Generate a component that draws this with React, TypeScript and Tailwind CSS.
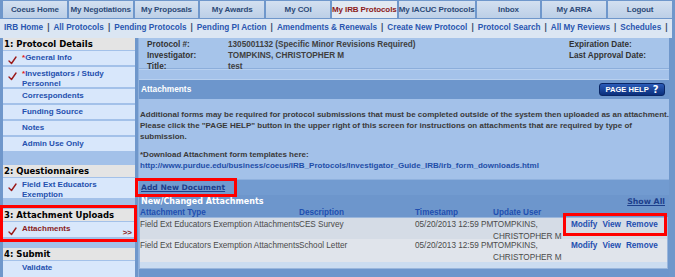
import React from "react";

const LS = { fontFamily: '"Liberation Sans", Arial, sans-serif' };
const DV = { fontFamily: '"DejaVu Sans", Verdana, sans-serif' };

function Check() {
  return (
    <svg width="9" height="9" viewBox="0 0 9 9" className="shrink-0">
      <path d="M1 5 L3.5 7.5 L8 1" fill="none" stroke="#9b1b1b" strokeWidth="1.4" strokeLinecap="round" strokeLinejoin="round" />
    </svg>
  );
}

function Header({ children }: { children: React.ReactNode }) {
  return (
    <div className="h-[12px] bg-[#e4e4e4] text-[8.5px] font-bold text-black leading-[12px] pl-[1px] whitespace-nowrap" style={DV}>
      {children}
    </div>
  );
}

function Item({ children, checked, h, active }: { children: React.ReactNode; checked?: boolean; h: string; active?: boolean }) {
  return (
    <div className={`${h} bg-[#d8e7fb] flex items-start pt-[2px] relative`}>
      <div className="w-[19px] pl-[5px] flex items-center h-[10px] mt-[2px]">{checked ? <Check /> : null}</div>
      <div className={active ? "text-[8px] font-bold leading-[10px] text-[#8a1c22]" : "text-[8px] font-bold leading-[10px] text-[#2450ae]"}>{children}</div>
      {active ? <div className="absolute right-[3px] top-[5px] text-[8px] font-bold text-[#8a1c22]">&gt;&gt;</div> : null}
    </div>
  );
}

export default function App() {
  const tabs = ["Coeus Home", "My Negotiations", "My Proposals", "My Awards", "My COI", "My IRB Protocols", "My IACUC Protocols", "Inbox", "My ARRA", "Logout"];
  const links = ["IRB Home", "All Protocols", "Pending Protocols", "Pending PI Action", "Amendments & Renewals", "Create New Protocol", "Protocol Search", "All My Reviews", "Schedules"];
  const rows = [
    { bg: "bg-[#d5dce6] h-[21px]", desc: "CES Survey" },
    { bg: "bg-[#e0e4eb] h-[23px]", desc: "School Letter" },
  ];
  return (
    <div className="w-[675px] h-[277px] overflow-hidden bg-[#6f97cb] relative" style={LS}>
      {/* tabs */}
      <div className="flex gap-[2px] px-[3px] pt-[1px] h-[18px]">
        {tabs.map((t) =>
          t === "My IRB Protocols" ? (
            <div key={t} className="flex-1 flex items-center justify-center bg-[#e2e9f2] text-[8px] font-bold text-[#8b1a1a] whitespace-nowrap tracking-[-0.1px]">
              {t}
            </div>
          ) : (
            <div key={t} className="flex-1 flex items-center justify-center bg-gradient-to-b from-[#d3e0f0] to-[#bccfe7] text-[8px] font-bold text-[#2c4a78] whitespace-nowrap tracking-[-0.1px]">
              {t}
            </div>
          )
        )}
      </div>
      {/* link bar */}
      <div className="mt-[1px] mr-[3px] h-[19px] bg-[#dbe6f3] flex items-center pl-[4px] text-[8.2px] font-bold text-[#2a56b0] whitespace-nowrap">
        {links.map((l) => (
          <span key={l} className="flex items-center">
            <span>{l}</span>
            <span className="text-[#3a4a6a] px-[4px]">|</span>
          </span>
        ))}
      </div>
      {/* body */}
      <div className="flex h-[239px] gap-[3px] pl-[3px]">
        {/* sidebar */}
        <div className="w-[132px] bg-[#a3c1e9] flex flex-col">
          <Header>1: Protocol Details</Header>
          <div className="mt-[1px]">
            <Item h="h-[14px]" checked>
              <span className="text-[#e02020]">*</span>General Info
            </Item>
          </div>
          <div className="mt-[2px]">
            <Item h="h-[20px]" checked>
              <span className="text-[#e02020]">*</span>Investigators / Study
              <br />
              Personnel
            </Item>
          </div>
          <div className="mt-[2px]"><Item h="h-[14px]">Correspondents</Item></div>
          <div className="mt-[2px]"><Item h="h-[14px]">Funding Source</Item></div>
          <div className="mt-[2px]"><Item h="h-[14px]">Notes</Item></div>
          <div className="mt-[2px]"><Item h="h-[14px]">Admin Use Only</Item></div>
          <div className="mt-[14px]"><Header>2: Questionnaires</Header></div>
          <div className="mt-[1px]">
            <Item h="h-[20px]" checked>
              Field Ext Educators
              <br />
              Exemption
            </Item>
          </div>
          <div className="mt-[11px]"><Header>3: Attachment Uploads</Header></div>
          <div className="mt-[1px]">
            <Item h="h-[15px]" checked active>
              Attachments
            </Item>
          </div>
          <div className="mt-[11px]"><Header>4: Submit</Header></div>
          <div className="mt-[1px]"><Item h="h-[16px]">Validate</Item></div>
        </div>
        {/* main */}
        <div className="w-[531px] flex flex-col bg-[#a3c1e9] border-l border-[#8eb0dc]">
          <div className="h-[31px] bg-[#a6c4ea] border-b border-[#8caedb] pt-[1px] pl-[8px] text-[8.2px] font-bold text-[#333] leading-[11px] whitespace-nowrap">
            <div className="flex">
              <div className="w-[81px]">Protocol #:</div>
              <div className="w-[341px] text-[#404040]">1305001132 (Specific Minor Revisions Required)</div>
              <div>Expiration Date:</div>
            </div>
            <div className="flex">
              <div className="w-[81px]">Investigator:</div>
              <div className="w-[341px] text-[#404040]">TOMPKINS, CHRISTOPHER M</div>
              <div>Last Approval Date:</div>
            </div>
            <div className="flex">
              <div className="w-[81px]">Title:</div>
              <div className="text-[#404040]">test</div>
            </div>
          </div>
          <div className="h-[11px] border-y border-[#b8d0ef] bg-[#a4c2ea]" />
          <div className="h-[19px] bg-[#6d96cc] flex items-start justify-between pl-[2px] pr-[4px]">
            <div className="text-[8.3px] font-bold text-white pt-[3px]">Attachments</div>
            <div className="mt-[3px] h-[13px] w-[66px] rounded-[3px] bg-gradient-to-b from-[#2b5cb8] to-[#0b2f7c] border border-[#0a2766] flex items-center justify-center gap-[4px] text-white font-bold">
              <span className="text-[7.6px]">PAGE HELP</span>
              <span className="text-[10px] leading-[10px]" style={{ fontFamily: '"DejaVu Sans", sans-serif' }}>?</span>
            </div>
          </div>
          <div className="h-[80px] pt-[10px] pl-[1px] text-[8px] font-bold text-[#3a3a3a] leading-[11px] whitespace-nowrap">
            <div>Additional forms may be required for protocol submissions that must be completed outside of the system then uploaded as an attachment.</div>
            <div>Please click the "PAGE HELP" button in the upper right of this screen for instructions on attachments that are required by type of</div>
            <div>submission.</div>
            <div className="mt-[7px]">*Download Attachment form templates here:</div>
            <div className="text-[#1f4ea8]">http://www.purdue.edu/business/coeus/IRB_Protocols/Investigator_Guide_IRB/irb_form_downloads.html</div>
          </div>
          <div className="h-[16px] bg-[#729bd0] border-t border-[#8fb1de] flex items-center pl-[2px]">
            <span className="text-[7.6px] font-bold text-[#1d3f8c] underline" style={DV}>Add New Document</span>
          </div>
          <div className="flex-1 bg-[#6d96cc] flex flex-col">
            <div className="h-[13px] flex items-center justify-between pl-[2px] pr-[4px]" style={DV}>
              <span className="text-[8px] font-bold text-white">New/Changed Attachments</span>
              <span className="text-[7.8px] font-bold text-[#1d3f8c] underline">Show All</span>
            </div>
            <div className="h-[9px] flex text-[8.2px] font-bold text-[#1f4fb0] leading-[9px] pl-[1px] whitespace-nowrap">
              <div className="w-[159px]">Attachment Type</div>
              <div className="w-[116px]">Description</div>
              <div className="w-[78px]">Timestamp</div>
              <div className="w-[78px]">Update User</div>
            </div>
            <div className="mr-[1px] border border-[#9ab6dc] bg-[#cbdcf0]">
              {rows.map((r, i) => (
                <div key={i} className={`${r.bg} flex pt-[1px] text-[8.2px] text-[#4a4a4a] leading-[12px]`}>
                  <div className="w-[159px] whitespace-nowrap">Field Ext Educators Exemption Attachments</div>
                  <div className="w-[116px]">{r.desc}</div>
                  <div className="w-[78px] whitespace-nowrap">05/20/2013 12:59 PM</div>
                  <div className="w-[78px] whitespace-nowrap">
                    TOMPKINS,
                    <br />
                    CHRISTOPHER M
                  </div>
                  <div className="flex gap-[5px] font-bold text-[#1f4fb0]">
                    <span>Modify</span>
                    <span>View</span>
                    <span>Remove</span>
                  </div>
                </div>
              ))}
              <div className="h-[6px]" />
            </div>
          </div>
        </div>
      </div>
      {/* annotation boxes */}
      <div className="absolute left-[0px] top-[205px] w-[137px] h-[37px] border-[3px] border-[#ff0000]" />
      <div className="absolute left-[135px] top-[178px] w-[102px] h-[19px] border-[3px] border-[#ff0000]" />
      <div className="absolute left-[563px] top-[213px] w-[104px] h-[23px] border-[3px] border-[#ff0000]" />
    </div>
  );
}
